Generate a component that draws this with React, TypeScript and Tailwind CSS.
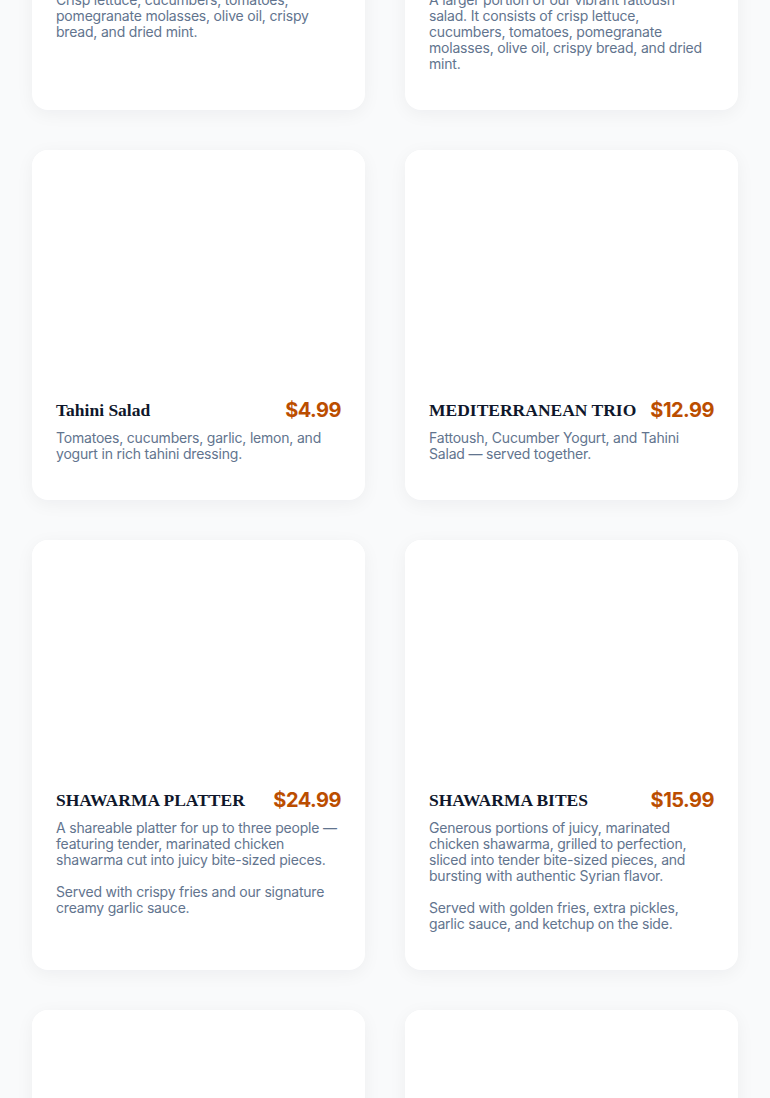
type Item = {
  name: string;
  price: string;
  description: string;
};

const items: Item[] = [
  {
    name: "Fattoush Salad",
    price: "$5.99",
    description:
      "Crisp lettuce, cucumbers, tomatoes, pomegranate molasses, olive oil, crispy bread, and dried mint.",
  },
  {
    name: "FATTOUSH LARGE",
    price: "$9.99",
    description:
      "A larger portion of our vibrant fattoush salad. It consists of crisp lettuce, cucumbers, tomatoes, pomegranate molasses, olive oil, crispy bread, and dried mint.",
  },
  {
    name: "Tahini Salad",
    price: "$4.99",
    description:
      "Tomatoes, cucumbers, garlic, lemon, and yogurt in rich tahini dressing.",
  },
  {
    name: "MEDITERRANEAN TRIO",
    price: "$12.99",
    description: "Fattoush, Cucumber Yogurt, and Tahini Salad — served together.",
  },
  {
    name: "SHAWARMA PLATTER",
    price: "$24.99",
    description:
      "A shareable platter for up to three people — featuring tender, marinated chicken shawarma cut into juicy bite-sized pieces.\n\nServed with crispy fries and our signature creamy garlic sauce.",
  },
  {
    name: "SHAWARMA BITES",
    price: "$15.99",
    description:
      "Generous portions of juicy, marinated chicken shawarma, grilled to perfection, sliced into tender bite-sized pieces, and bursting with authentic Syrian flavor.\n\nServed with golden fries, extra pickles, garlic sauce, and ketchup on the side.",
  },
  {
    name: "CHICKEN WRAP",
    price: "$9.99",
    description: "Marinated chicken, garlic sauce, pickles and fries in warm bread.",
  },
  {
    name: "FALAFEL WRAP",
    price: "$7.99",
    description: "Crispy falafel, tahini, tomatoes, pickles and fresh greens.",
  },
];

function MenuCard({ item }: { item: Item }) {
  return (
    <div className="bg-white rounded-2xl shadow-[0_4px_18px_rgba(15,23,42,0.05)] overflow-hidden">
      <div className="h-[224px] w-full bg-white" />
      <div className="px-6 pt-[22px] pb-[38px]">
        <div className="flex items-center justify-between gap-3 h-7">
          <h3 className="whitespace-nowrap font-['Liberation_Serif',serif] font-bold text-[17.5px] leading-7 text-slate-900">
            {item.name}
          </h3>
          <span className="shrink-0 whitespace-nowrap font-['Inter',sans-serif] font-bold text-xl tracking-[-0.5px] leading-7 text-amber-700">
            {item.price}
          </span>
        </div>
        <p className="mt-[6px] font-['Inter',sans-serif] text-sm tracking-[-0.2px] leading-4 text-slate-500 whitespace-pre-line">
          {item.description}
        </p>
      </div>
    </div>
  );
}

export default function App() {
  return (
    <div className="min-h-screen bg-gray-50 px-8 overflow-hidden">
      <div className="grid grid-cols-2 gap-10 -mt-[288px] pb-10">
        {items.map((item) => (
          <MenuCard key={item.name} item={item} />
        ))}
      </div>
    </div>
  );
}
